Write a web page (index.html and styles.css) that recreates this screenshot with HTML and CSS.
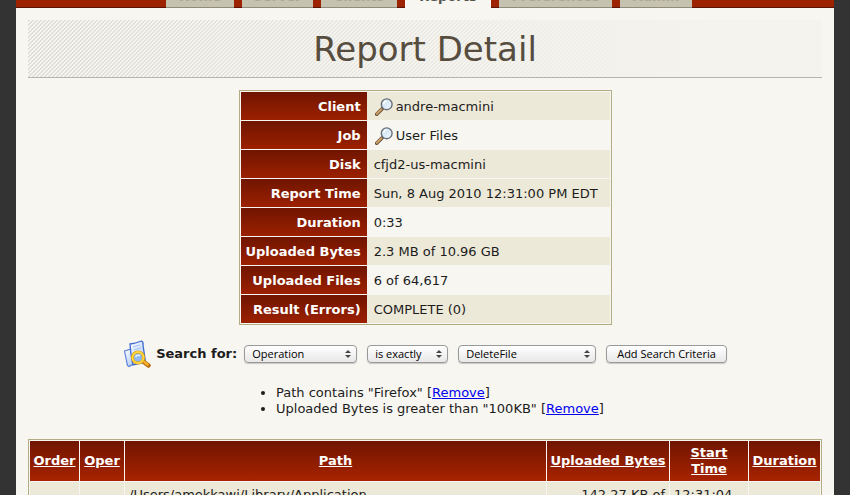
FILE: index.html
```html
<!DOCTYPE html>
<html lang="en">
<head>
<meta charset="utf-8">
<title>Report Detail</title>
<link rel="stylesheet" href="styles.css">
</head>
<body>
<svg class="defs" aria-hidden="true">
  <defs>
    <linearGradient id="lens" x1="0" y1="0" x2="1" y2="1">
      <stop offset="0" stop-color="#c3dcf0"/>
      <stop offset="1" stop-color="#f4faff"/>
    </linearGradient>
    <linearGradient id="paper" x1="0" y1="0" x2="1" y2="1">
      <stop offset="0" stop-color="#ffffff"/>
      <stop offset="1" stop-color="#a5c4f8"/>
    </linearGradient>
    <symbol id="magnifier" viewBox="0 0 16 16">
      <path d="M1.5 14.5 L6.2 9.8" stroke="#6e5238" stroke-width="3.2" stroke-linecap="round"/>
      <path d="M1.6 14.1 L5.6 10.1" stroke="#d0a56c" stroke-width="1.8" stroke-linecap="round"/>
      <circle cx="10.4" cy="5.6" r="4.8" fill="url(#lens)" stroke="#666e78" stroke-width="1.2"/>
      <path d="M7.6 5.2 A3 3 0 0 1 10.2 2.7" fill="none" stroke="#fff" stroke-width="1.2"/>
    </symbol>
  </defs>
</svg>
<div class="page">
  <nav class="tabs">
    <a class="tab tab-home" href="#">Home</a>
    <a class="tab tab-server" href="#">Server</a>
    <a class="tab tab-clients" href="#">Clients</a>
    <a class="tab tab-reports active" href="#">Reports</a>
    <a class="tab tab-preferences" href="#">Preferences</a>
    <a class="tab tab-admin" href="#">Admin</a>
  </nav>
  <main>
    <h1>Report Detail</h1>
    <table class="detail">
      <tr class="shaded"><th scope="row">Client</th><td><svg class="mag"><use href="#magnifier"/></svg>andre-macmini</td></tr>
      <tr><th scope="row">Job</th><td><svg class="mag"><use href="#magnifier"/></svg>User Files</td></tr>
      <tr class="shaded"><th scope="row">Disk</th><td>cfjd2-us-macmini</td></tr>
      <tr class="shaded"><th scope="row">Report Time</th><td>Sun, 8 Aug 2010 12:31:00 PM EDT</td></tr>
      <tr><th scope="row">Duration</th><td>0:33</td></tr>
      <tr class="shaded"><th scope="row">Uploaded Bytes</th><td>2.3 MB of 10.96 GB</td></tr>
      <tr><th scope="row">Uploaded Files</th><td>6 of 64,617</td></tr>
      <tr class="shaded"><th scope="row">Result (Errors)</th><td>COMPLETE (0)</td></tr>
    </table>
    <form class="search">
      <svg class="search-icon" viewBox="0 0 28 28" aria-hidden="true">
        <path d="M1.5 11 L8 9 L12 23 L6 26.5 Q4 26 4 23 Z" fill="url(#paper)" stroke="#5b80dc" stroke-width="1.2"/>
        <path d="M7 4 Q12 3.5 18.5 1 Q20.5 2 20 5 L22.5 22 L10 25 Q7.5 14 7 4 Z" fill="url(#paper)" stroke="#4169d2" stroke-width="1.3"/>
        <path d="M10 7 L17 5 M10.5 10 L18 8" stroke="#a9c0f2" stroke-width="1.2"/>
        <path d="M19.5 21 L25.5 25.5" stroke="#b8690c" stroke-width="4.4" stroke-linecap="round"/>
        <path d="M19.5 20.5 L24.5 24.5" stroke="#f7b12b" stroke-width="2.6" stroke-linecap="round"/>
        <circle cx="15" cy="17.5" r="5.5" fill="#8db9f7" stroke="#d2960f" stroke-width="3.2"/>
        <circle cx="15" cy="17.5" r="5.5" fill="none" stroke="#ffd83c" stroke-width="2"/>
        <path d="M12.5 17 Q14 14.5 17 15.5" fill="none" stroke="#e8f4ff" stroke-width="1.5"/>
      </svg>
      <label for="field">Search for:</label>
      <span class="picker picker-field"><select id="field"><option>Operation</option></select></span>
      <span class="picker picker-match"><select aria-label="Comparison"><option>is exactly</option></select></span>
      <span class="picker picker-value"><select aria-label="Value"><option>DeleteFile</option></select></span>
      <button type="button">Add Search Criteria</button>
    </form>
    <ul class="criteria">
      <li>Path contains "Firefox" [<a href="#">Remove</a>]</li>
      <li>Uploaded Bytes is greater than "100KB" [<a href="#">Remove</a>]</li>
    </ul>
    <table class="files">
      <colgroup><col class="c-order"><col class="c-oper"><col><col class="c-bytes"><col class="c-start"><col class="c-duration"></colgroup>
      <thead>
        <tr>
          <th><a href="#">Order</a></th>
          <th><a href="#">Oper</a></th>
          <th><a href="#">Path</a></th>
          <th><a href="#">Uploaded Bytes</a></th>
          <th><a href="#">Start Time</a></th>
          <th><a href="#">Duration</a></th>
        </tr>
      </thead>
      <tbody>
        <tr><td></td><td></td><td>/Users/amekkawi/Library/Application</td><td class="num">142.27 KB of</td><td>12:31:04</td><td></td></tr>
      </tbody>
    </table>
  </main>
</div>
</body>
</html>
```
FILE: styles.css
```css
* { box-sizing: border-box; }

html { height: 100%; overflow: hidden; }

body {
  height: 100%;
  margin: 0;
  padding: 0 16px;
  overflow: hidden;
  background: #333;
  color: #1c1c1c;
  font: 13px/16px Verdana, "DejaVu Sans", sans-serif;
}

.defs { position: absolute; width: 0; height: 0; }

.page { min-height: 100%; background: #f7f6f1; }

.tabs {
  display: flex;
  align-items: flex-end;
  gap: 8px;
  height: 8px;
  padding-left: 150px;
  overflow: hidden;
  background: linear-gradient(#9c2200 7px, #5c1400 7px);
}

.tab {
  flex: none;
  padding-bottom: 2px;
  border-bottom: 1px solid #8f8c7e;
  background: #c5c2b0;
  color: #aaa797;
  font-weight: bold;
  text-align: center;
  text-decoration: none;
}

.tab.active { border-color: #f7f6f1; background: #f7f6f1; color: #55544c; }

.tab-home { width: 68px; }
.tab-server { width: 71px; }
.tab-clients { width: 76px; }
.tab-reports { width: 86px; }
.tab-preferences { width: 113px; }
.tab-admin { width: 72px; }

main { padding: 12px 12px 0; }

h1 {
  margin: 0 0 12px;
  padding-top: 1px;
  border-bottom: 1px solid #b5b4ae;
  background:
    linear-gradient(90deg, rgba(244, 243, 238, 0), #f4f3ee 90%),
    linear-gradient(135deg, #dfded9 25%, #f6f5f0 25% 50%, #dfded9 50% 75%, #f6f5f0 75%) 0 0 / 4px 4px;
  color: #574d3f;
  font-size: 34px;
  font-weight: normal;
  line-height: 56px;
  text-align: center;
}

table { border: 1px solid #b3ad86; border-collapse: separate; }

th { background: linear-gradient(#701500, #9c2000); color: #fff; font-weight: bold; }

.detail { min-width: 373px; margin: 0 auto; padding: 0 1px; border-spacing: 0 1px; }

.detail th { width: 126px; padding: 7px 6px 5px 5px; text-align: right; white-space: nowrap; }

.detail td { height: 28px; padding: 7px 7px 5px; }

.detail .shaded td { background: #ede9d9; }

.mag { width: 18px; height: 18px; margin: -4px 3px -2px 1px; vertical-align: middle; }

.search {
  display: flex;
  align-items: center;
  justify-content: center;
  gap: 10px;
  margin-top: 15px;
}

.search-icon { width: 28px; height: 28px; margin-right: -5px; }

.search label { margin-right: -3px; font-weight: bold; }

.picker { position: relative; }

.picker::before,
.picker::after {
  content: "";
  position: absolute;
  right: 6px;
  border: 3px solid transparent;
  pointer-events: none;
}

.picker::before { top: 2px; border-bottom-color: #444; }
.picker::after { bottom: 2px; border-top-color: #444; }

select,
button {
  display: block;
  height: 18px;
  margin: 0;
  border: 1px solid #999;
  border-radius: 4px;
  background: linear-gradient(#fff, #f3f3f3 50%, #e8e8e8);
  box-shadow: 0 1px 1px #c9c8c4;
  color: #000;
  font: 11px/16px "Lucida Grande", "Open Sans", sans-serif;
}

select { width: 100%; padding: 0 7px; appearance: none; }

button { padding: 0 10px; white-space: nowrap; }

.picker-field { width: 113px; }
.picker-match { width: 81px; }
.picker-value { width: 138px; }

.criteria { max-width: 378px; margin: 17px auto 22px; padding: 0 0 0 40px; white-space: nowrap; }

.criteria a { color: #0000ee; }

.files { width: 100%; border-spacing: 1px; table-layout: fixed; }

.files th { height: 40px; padding: 4px 3px; background: linear-gradient(#701500, #a82300); }

.files th a { color: #fff; }

.files td { padding: 5px 4px; background: #ede9d9; vertical-align: top; white-space: nowrap; }

.files .num { text-align: right; }

.c-order { width: 49px; }
.c-oper { width: 44px; }
.c-bytes { width: 122px; }
.c-start { width: 78px; }
.c-duration { width: 71px; }
```
